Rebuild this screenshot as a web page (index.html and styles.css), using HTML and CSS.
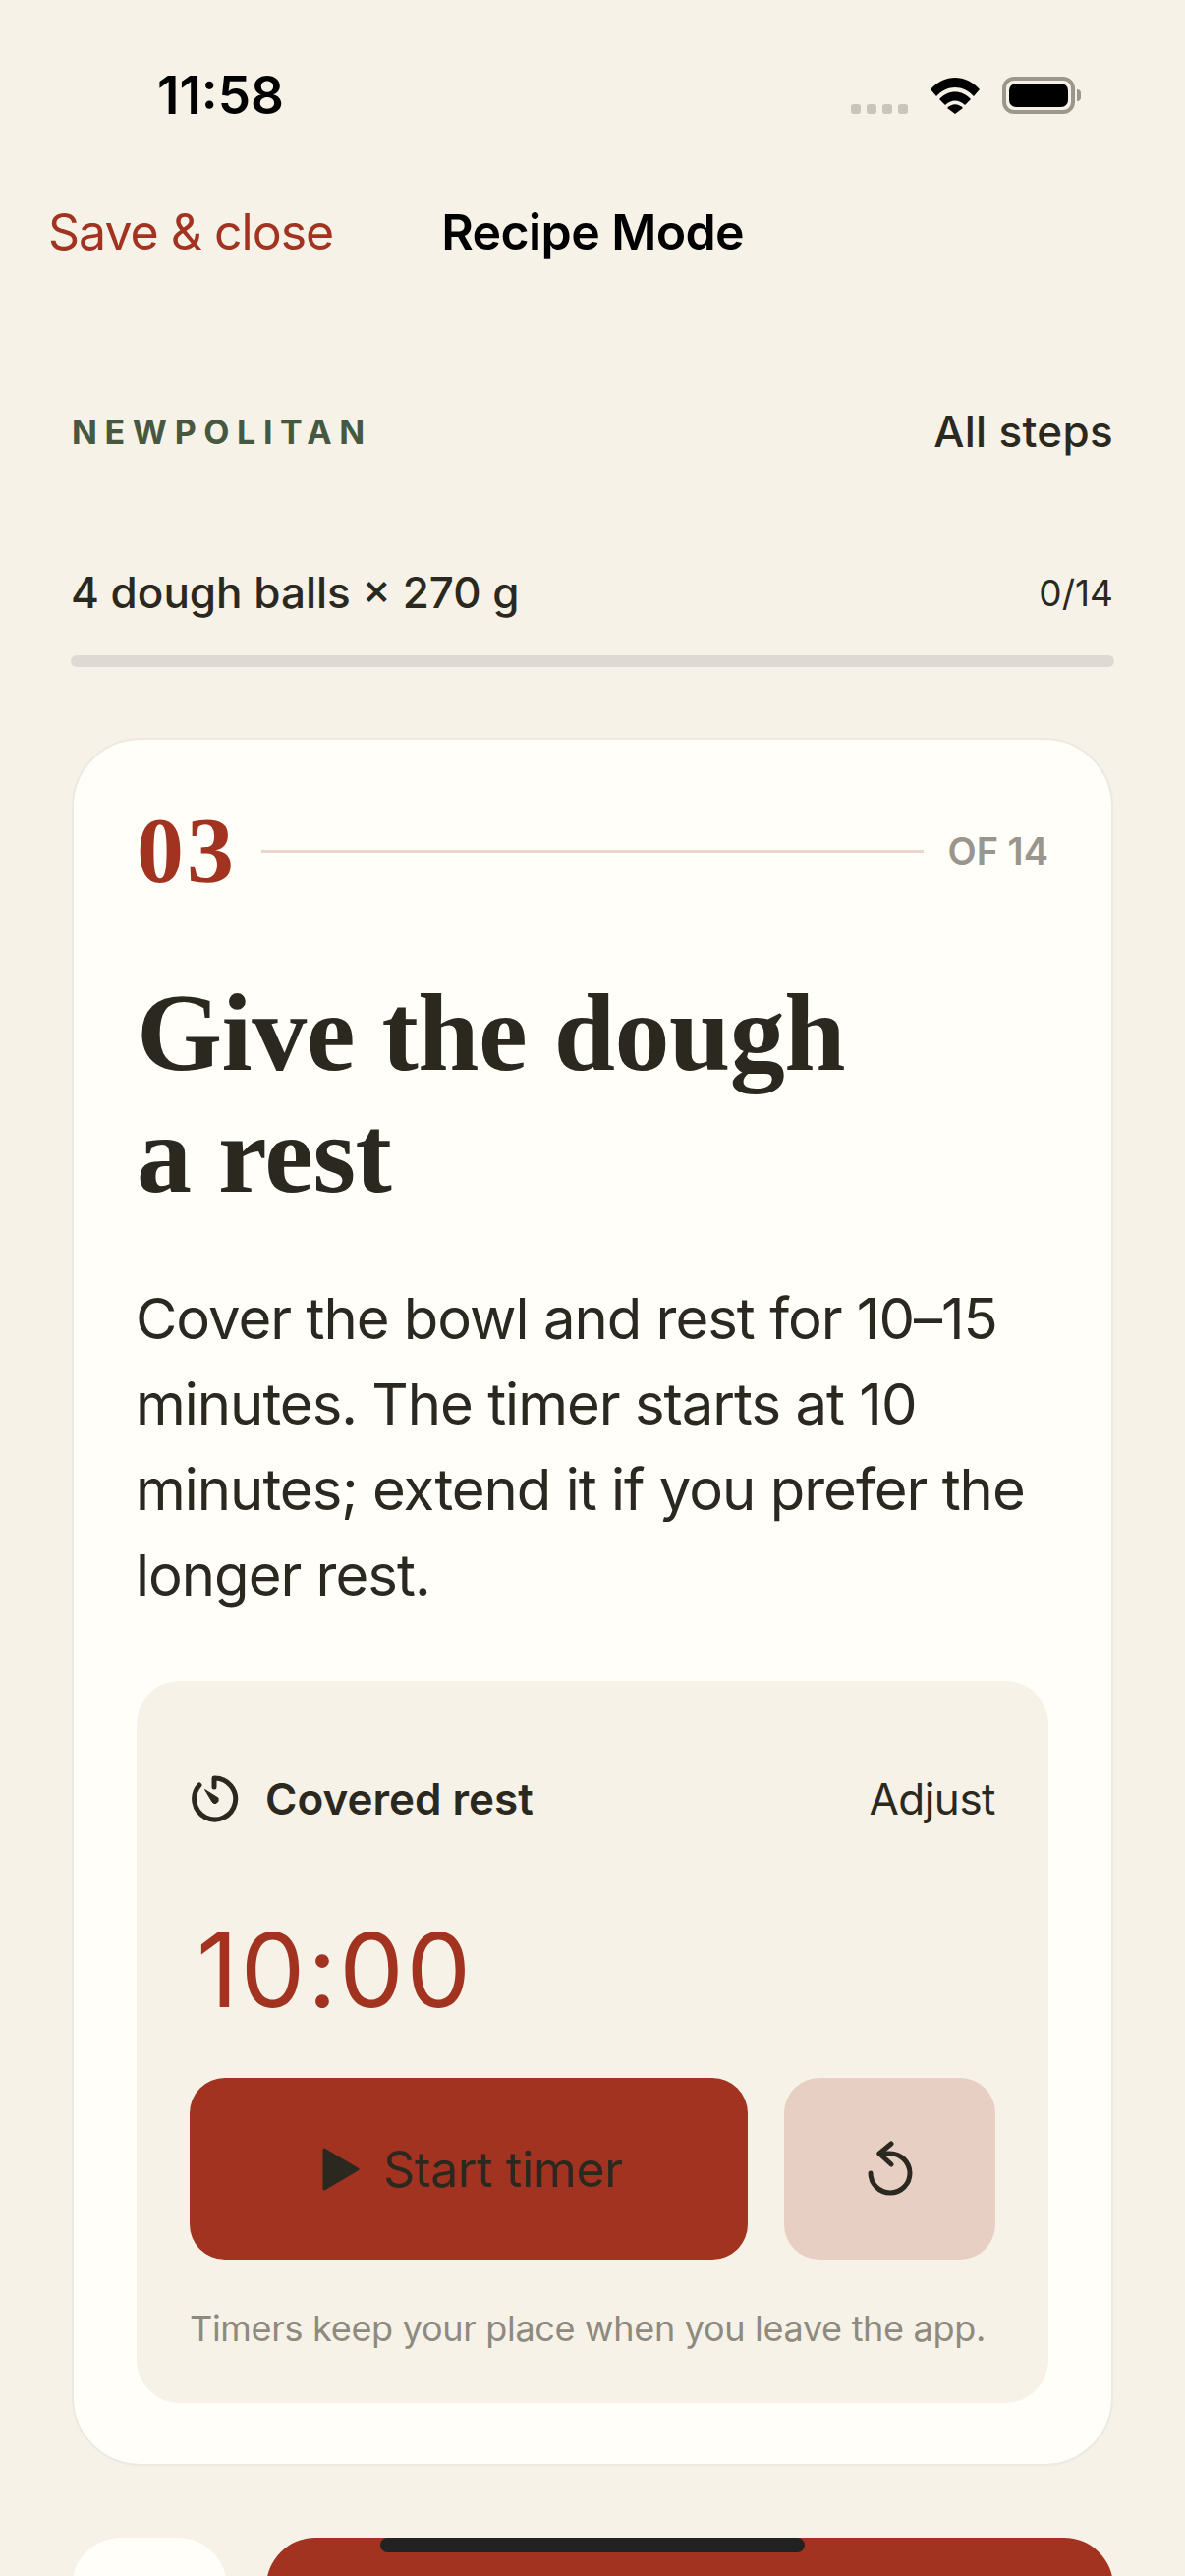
FILE: index.html
```html
<!DOCTYPE html>
<html lang="en">
<head>
  <meta charset="UTF-8" />
  <meta name="viewport" content="width=device-width, initial-scale=1.0"/>
  <title>Recipe Mode</title>
  <link rel="stylesheet" href="styles.css">
</head>
<body>
  <div class="screen">
    <div class="status-bar">
      <span class="clock">11:58</span>
      <div class="status-icons">
        <div class="signal"><i></i><i></i><i></i><i></i></div>
        <svg class="wifi" width="52" height="38" viewBox="0 0 52 38">
          <path d="M1 13 C15 -3 37 -3 51 13 L45 20 C34 8 18 8 7 20 Z" fill="#000"/>
          <path d="M10 23 C19 13 33 13 42 23 L36 29 C30 23 22 23 16 29 Z" fill="#000"/>
          <path d="M18 32 C23 27 29 27 34 32 L26 38 Z" fill="#000"/>
        </svg>
        <div class="battery"><div class="battery-fill"></div></div>
        <div class="battery-nub"></div>
      </div>
    </div>

    <div class="nav">
      <span class="nav-close">Save &amp; close</span>
      <span class="nav-title">Recipe Mode</span>
    </div>

    <div class="section-row">
      <span class="brand">NEWPOLITAN</span>
      <span class="all-steps">All steps</span>
    </div>

    <div class="meta-row">
      <span class="batch">4 dough balls × 270 g</span>
      <span class="count">0/14</span>
    </div>
    <div class="progress"></div>

    <div class="card">
      <div class="step-row">
        <span class="step-num">03</span>
        <div class="step-line"></div>
        <span class="step-of">OF 14</span>
      </div>
      <h1 class="step-title">Give the dough<br>a rest</h1>
      <p class="step-text">Cover the bowl and rest for 10–15 minutes. The timer starts at 10 minutes; extend it if you prefer the longer rest.</p>

      <div class="timer-panel">
        <div class="timer-head">
          <svg class="timer-icon" width="48" height="48" viewBox="0 0 48 48" fill="none">
            <path d="M8 10 A21 21 0 1 0 23 3 L23 12" stroke="#2b2820" stroke-width="5" stroke-linecap="round" stroke-linejoin="round"/>
            <path d="M13.5 14.5 L27 23 Q28 27 25 28.5 Q22 29 21 27 Z" fill="#2b2820" stroke="#2b2820" stroke-width="1" stroke-linejoin="round"/>
          </svg>
          <span class="timer-name">Covered rest</span>
          <span class="timer-adjust">Adjust</span>
        </div>
        <div class="timer-value">10:00</div>
        <div class="timer-buttons">
          <button class="start-btn">
            <svg width="38" height="44" viewBox="0 0 38 44">
              <path d="M2 2 L36 22 L2 42 Z" fill="#2b2820" stroke="#2b2820" stroke-width="3" stroke-linejoin="round"/>
            </svg>
            Start timer
          </button>
          <button class="reset-btn">
            <svg width="48" height="58" viewBox="0 0 48 58" fill="none">
              <path d="M4 33 A20 20 0 1 0 24 13 L13 13" stroke="#2b2820" stroke-width="5" stroke-linecap="round"/>
              <path d="M25 3 L13 13 L25 24" stroke="#2b2820" stroke-width="5" stroke-linecap="round" stroke-linejoin="round"/>
            </svg>
          </button>
        </div>
        <p class="timer-note">Timers keep your place when you leave the app.</p>
      </div>
    </div>

    <div class="actions">
      <div class="back-btn"></div>
      <div class="next-btn"></div>
    </div>

    <div class="home-bar"></div>
  </div>
</body>
</html>
```

FILE: styles.css
```css
* {
  box-sizing: border-box;
}

html, body {
  margin: 0;
  padding: 0;
}

body {
  background: #f6f2e8;
  color: #2b2820;
  font-family: Inter, 'Noto Sans', sans-serif;
}

.screen {
  position: relative;
  width: 1206px;
  height: 2622px;
  overflow: hidden;
  padding: 0 73px;
}

.status-bar {
  display: flex;
  justify-content: space-between;
  align-items: center;
  height: 116px;
  padding: 78px 33px 0 87px;
}

.clock {
  font-size: 53px;
  font-weight: 600;
  color: #000;
}

.status-icons {
  display: flex;
  align-items: center;
}

.signal {
  display: flex;
  gap: 6px;
  margin-top: 28px;
  margin-right: 22px;
}

.signal i {
  width: 10px;
  height: 10px;
  border-radius: 3px;
  background: #c9c5bb;
}

.wifi {
  margin-right: 22px;
}

.battery {
  width: 74px;
  height: 38px;
  border: 4px solid #9c978d;
  border-radius: 12px;
  padding: 3px;
}

.battery-fill {
  height: 100%;
  background: #000;
  border-radius: 7px;
}

.battery-nub {
  width: 4px;
  height: 12px;
  margin-left: 2px;
  background: #9c978d;
  border-radius: 0 4px 4px 0;
}

.nav {
  display: flex;
  align-items: center;
  gap: 110px;
  margin: 90px 0 0 -24px;
  height: 60px;
}

.nav-close {
  font-size: 50px;
  letter-spacing: -1px;
  color: #a23320;
}

.nav-title {
  font-size: 50px;
  font-weight: 600;
  letter-spacing: -0.6px;
  color: #000;
}

.section-row {
  display: flex;
  justify-content: space-between;
  align-items: center;
  margin-top: 143px;
  height: 60px;
}

.brand {
  font-size: 34px;
  font-weight: 700;
  letter-spacing: 7.6px;
  color: #46583f;
}

.all-steps {
  font-size: 44px;
  font-weight: 500;
  letter-spacing: 0.3px;
}

.meta-row {
  display: flex;
  justify-content: space-between;
  align-items: center;
  margin-top: 104px;
  height: 60px;
}

.batch {
  margin-left: -1px;
  font-size: 44px;
  font-weight: 500;
}

.count {
  font-size: 37px;
}

.progress {
  height: 12px;
  margin: 34px -1px 0;
  background: #dedad3;
  border-radius: 6px;
}

.card {
  margin-top: 72px;
  height: 1759px;
  padding: 63px 64px;
  background: #fffef9;
  border: 2px solid #ece9e2;
  border-radius: 70px;
}

.step-row {
  display: flex;
  align-items: center;
}

.step-num {
  font-family: 'Liberation Serif', serif;
  font-weight: 700;
  font-size: 96px;
  line-height: 100px;
  letter-spacing: 3px;
  color: #a23320;
}

.step-line {
  flex: 1;
  height: 3px;
  margin: 0 25px;
  background: #ecd5cb;
}

.step-of {
  font-size: 38px;
  font-weight: 600;
  color: #9a968d;
}

.step-title {
  margin: 73px 0 0;
  font-family: 'Liberation Serif', serif;
  font-weight: 700;
  font-size: 112px;
  line-height: 124px;
  letter-spacing: -0.5px;
  color: #2b2820;
}

.step-text {
  margin: 62px 0 0 -1px;
  font-size: 58px;
  line-height: 87px;
  letter-spacing: -1px;
}

.timer-panel {
  margin-top: 64px;
  height: 735px;
  padding: 92px 54px 0;
  background: #f6f2e8;
  border-radius: 44px;
}

.timer-head {
  display: flex;
  align-items: center;
  height: 56px;
}

.timer-icon {
  margin: 0 27px 0 2px;
}

.timer-name {
  flex: 1;
  font-size: 44px;
  font-weight: 600;
}

.timer-adjust {
  font-size: 44px;
  letter-spacing: -0.5px;
}

.timer-value {
  margin: 86px 0 0 7px;
  font-size: 104px;
  line-height: 120px;
  letter-spacing: 2.5px;
  color: #a23320;
}

.timer-buttons {
  display: flex;
  gap: 37px;
  margin-top: 50px;
}

.start-btn,
.reset-btn {
  display: flex;
  justify-content: center;
  align-items: center;
  height: 185px;
  border: none;
  border-radius: 36px;
  color: #2b2820;
  font-family: inherit;
}

.start-btn {
  flex: 1;
  gap: 24px;
  padding: 0 0 0 8px;
  font-size: 50px;
  letter-spacing: -0.3px;
  background: #a23320;
}

.reset-btn {
  width: 215px;
  background: #e8cfc4;
}

.timer-note {
  margin: 48px 0 0;
  font-size: 36px;
  letter-spacing: -0.3px;
  color: #8e8a7f;
}

.actions {
  display: flex;
  gap: 40px;
  margin-top: 73px;
}

.back-btn {
  width: 158px;
  height: 180px;
  background: #fffef9;
  border-radius: 50px;
}

.next-btn {
  flex: 1;
  height: 180px;
  background: #a23320;
  border-radius: 50px;
}

.home-bar {
  position: absolute;
  left: 387px;
  top: 2583px;
  width: 432px;
  height: 15px;
  background: #222;
  border-radius: 8px;
}
```
